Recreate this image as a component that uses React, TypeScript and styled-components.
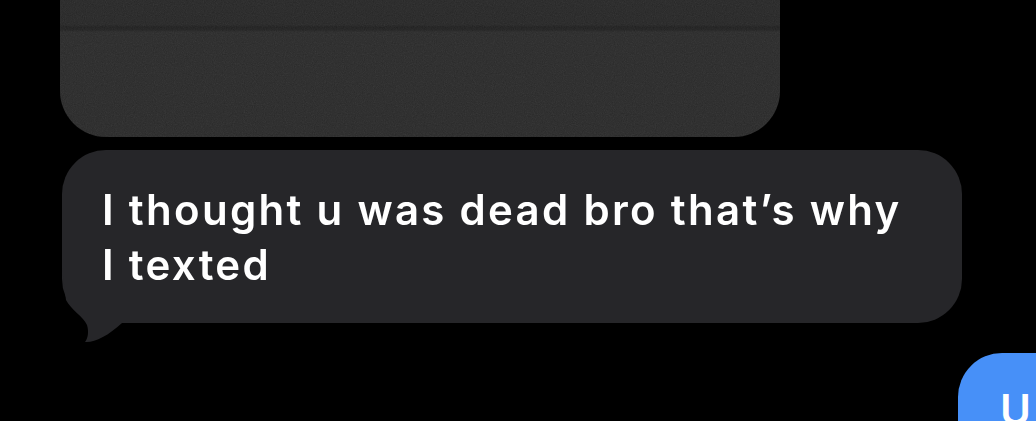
import React from "react";
import styled, { createGlobalStyle } from "styled-components";

const Global = createGlobalStyle`
  html, body {
    margin: 0;
    padding: 0;
    background: #000;
    overflow: hidden;
  }
  body {
    font-family: Inter, "Noto Sans", "Liberation Sans", sans-serif;
    -webkit-font-smoothing: antialiased;
  }
`;

const Thread = styled.div`
  width: 1036px;
  height: 421px;
  display: flex;
  flex-direction: column;
  background: #000;
  overflow: hidden;

  & > * {
    flex-shrink: 0;
  }
`;

/* photo attachment whose top is scrolled out of view */
const Attachment = styled.div`
  position: relative;
  margin-left: 60px;
  width: 720px;
  height: 137px;
  border-radius: 0 0 46px 46px;
  overflow: hidden;
  background: linear-gradient(
    to bottom,
    #262626 0px,
    #252525 25px,
    #1e1e1e 27px,
    #202020 30px,
    #292929 32px,
    #282828 137px
  );
`;

const Grain = styled.svg`
  position: absolute;
  inset: 0;
  width: 100%;
  height: 100%;
  opacity: 0.1;
  mix-blend-mode: screen;
`;

const IncomingRow = styled.div`
  display: flex;
  margin-top: 13px;
  padding-left: 62px;
`;

const Bubble = styled.div<{ $tone: "gray" | "blue" }>`
  position: relative;
  box-sizing: border-box;
  border-radius: 44px;
  color: #fff;
  font-size: 42px;
  line-height: 55px;
  font-weight: 600;
  letter-spacing: 2.3px;
  background: ${(p) => (p.$tone === "blue" ? "#4790f8" : "#262629")};
`;

const IncomingBubble = styled(Bubble)`
  width: 900px;
  height: 173px;
  padding: 32px 40px 0 40px;
  white-space: nowrap;
`;

const Tail = styled.svg`
  position: absolute;
  left: 0;
  top: 0;
  width: 70px;
  height: 200px;
  overflow: visible;
`;

const Message = styled.span`
  position: relative;
`;

const OutgoingRow = styled.div`
  display: flex;
  margin-top: 30px;
  padding-left: 958px;
`;

const OutgoingBubble = styled(Bubble)`
  flex: 0 0 auto;
  width: 260px;
  height: 120px;
  padding: 29px 0 0 42px;
`;

export default function App() {
  return (
    <>
      <Global />
      <Thread>
        <Attachment>
          <Grain viewBox="0 0 720 137" preserveAspectRatio="none">
            <filter id="grain">
              <feTurbulence type="fractalNoise" baseFrequency="0.9" numOctaves="2" seed="4" />
              <feColorMatrix type="saturate" values="0" />
            </filter>
            <rect width="720" height="137" filter="url(#grain)" />
          </Grain>
        </Attachment>

        <IncomingRow>
          <IncomingBubble $tone="gray">
            <Tail viewBox="0 0 70 200">
              <path
                d="M0 118 L4 150 C9 160 21 166 25 175 C27 182 26 188 23 192 C32 193 46 186 60 173 L60 118 Z"
                fill="#262629"
              />
            </Tail>
            <Message>
              I thought u was dead bro that’s why
              <br />I texted
            </Message>
          </IncomingBubble>
        </IncomingRow>

        <OutgoingRow>
          <OutgoingBubble $tone="blue">U</OutgoingBubble>
        </OutgoingRow>
      </Thread>
    </>
  );
}
